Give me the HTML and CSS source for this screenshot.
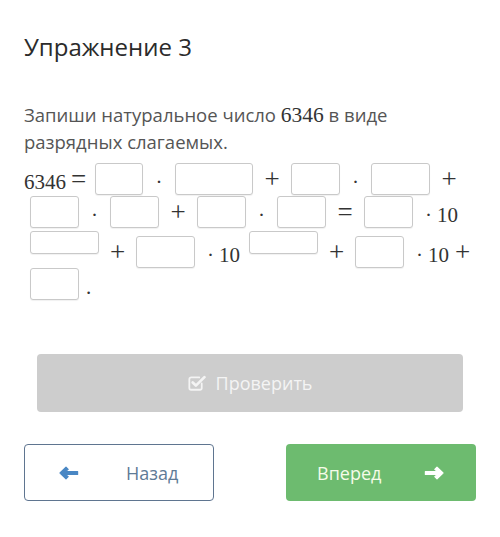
FILE: index.html
```html
<!DOCTYPE html>
<html lang="ru">
<head>
<meta charset="utf-8">
<title>Упражнение 3</title>
<link rel="stylesheet" href="styles.css">
</head>
<body>
<main class="page">
  <h1 class="title">Упражнение 3</h1>
  <p class="task">Запиши натуральное число <span class="m">6346</span> в виде разрядных слагаемых.</p>

  <div class="math">
    <div class="row r1">
      <span class="t num">6346</span><span class="t rel eq1">=</span>
      <span class="box w48"></span>
      <span class="t dot" style="width:32px">·</span>
      <span class="box w78"></span>
      <span class="t op" style="width:38px">+</span>
      <span class="box w49"></span>
      <span class="t dot" style="width:31px">·</span>
      <span class="box w59"></span>
      <span class="t op" style="width:38px">+</span>
    </div>
    <div class="row r2">
      <span class="box w49"></span>
      <span class="t dot" style="width:31px">·</span>
      <span class="box w49"></span>
      <span class="t op" style="width:38px">+</span>
      <span class="box w49"></span>
      <span class="t dot" style="width:31px">·</span>
      <span class="box w49"></span>
      <span class="t op" style="width:38px">=</span>
      <span class="box w49"></span>
      <span class="t cdot">·</span><span class="t num ten">10</span>
    </div>
    <div class="row r3">
      <span class="box w69 short"></span>
      <span class="t op" style="width:37px">+</span>
      <span class="box w59"></span>
      <span class="t cdot">·</span><span class="t num ten">10</span>
      <span class="box w69 short after10"></span>
      <span class="t op" style="width:37px">+</span>
      <span class="box w49"></span>
      <span class="t cdot">·</span><span class="t num ten">10</span><span class="t op plus-end">+</span>
    </div>
    <div class="row r4">
      <span class="box w49"></span>
      <span class="t period">.</span>
    </div>
  </div>

  <button class="check-btn" type="button">
    <svg class="check-ico" viewBox="0 0 16 16" width="18" height="18" aria-hidden="true">
      <path d="M12.2 8.4 V12.4 A1.6 1.6 0 0 1 10.6 14 H2.8 A1.6 1.6 0 0 1 1.2 12.4 V4.6 A1.6 1.6 0 0 1 2.8 3 H10" fill="none" stroke="currentColor" stroke-width="1.6" stroke-linecap="round"/>
      <path d="M4.2 7.6 L7 10.3 L14.6 2.8" fill="none" stroke="currentColor" stroke-width="2.4" stroke-linecap="round" stroke-linejoin="round"/>
    </svg>
    <span>Проверить</span>
  </button>

  <nav class="nav">
    <button class="nav-btn back" type="button">
      <svg class="arrow" viewBox="0 0 20 14" width="20" height="14" aria-hidden="true">
        <path d="M1 7 L7 1.2 L9.2 3.4 L6.4 5.6 H18.6 V8.4 H6.4 L9.2 10.6 L7 12.8 Z" fill="currentColor" stroke="currentColor" stroke-width="1.2" stroke-linejoin="round"/>
      </svg>
      <span>Назад</span>
    </button>
    <button class="nav-btn next" type="button">
      <span>Вперед</span>
      <svg class="arrow" viewBox="0 0 20 14" width="20" height="14" aria-hidden="true">
        <path d="M19 7 L13 1.2 L10.8 3.4 L13.6 5.6 H1.4 V8.4 H13.6 L10.8 10.6 L13 12.8 Z" fill="currentColor" stroke="currentColor" stroke-width="1.2" stroke-linejoin="round"/>
      </svg>
    </button>
  </nav>
</main>
</body>
</html>
```

FILE: styles.css
```css
html, body {
  margin: 0;
  padding: 0;
  background: #ffffff;
}

body {
  font-family: "Open Sans", "Noto Sans", sans-serif;
}

.page {
  padding: 31px 24px 0 24px;
}

.title {
  margin: 0;
  font-size: 24px;
  line-height: 32px;
  font-weight: 400;
  color: #2b2b2b;
}

.task {
  max-width: 400px;
  margin: 37.6px 0 0 0;
  font-size: 18.5px;
  line-height: 27px;
  color: #555555;
}

.m {
  font-family: "Liberation Serif", "Times New Roman", serif;
  font-size: 21.5px;
  line-height: 1;
  color: #333333;
}

.math {
  margin-top: 8.7px;
  font-family: "Liberation Serif", "Times New Roman", serif;
  font-size: 21px;
  color: #333333;
}

.row {
  display: flex;
  align-items: flex-end;
}

.r1 { height: 32px; }
.r2 { height: 32px; margin-top: 1px; padding-left: 6px; }
.r3 { height: 37px; margin-top: 3px; padding-left: 6px; }
.r4 { height: 32px; margin-top: 0; padding-left: 6px; }

.t {
  display: block;
  height: 32px;
  box-sizing: border-box;
  padding-top: 6px;
  line-height: 26px;
  white-space: nowrap;
}

.num { font-size: 21px; }

.eq1 {
  width: 29px;
  text-align: left;
  padding-left: 5px;
  font-size: 27px;
  padding-top: 3px;
}

.op {
  text-align: center;
  font-size: 27px;
  padding-top: 3px;
}

.dot {
  text-align: center;
}

.cdot {
  margin-left: 12px;
}

.ten {
  margin-left: 5px;
}

.after10 {
  margin-left: 9px;
}

.plus-end {
  margin-left: 6px;
}

.period {
  margin-left: 7px;
}

.box {
  display: block;
  height: 32px;
  box-sizing: border-box;
  border: 1px solid #c9c9c9;
  border-radius: 3px;
  background: #ffffff;
  box-shadow: 0 1px 1px rgba(0, 0, 0, 0.06);
}

.box.short {
  height: 23px;
  align-self: flex-start;
}

.w48 { width: 48px; }
.w49 { width: 49px; }
.w59 { width: 59px; }
.w69 { width: 69px; }
.w78 { width: 78px; }

.check-btn {
  display: flex;
  align-items: center;
  justify-content: center;
  gap: 10px;
  width: 426px;
  height: 58px;
  margin: 54px 0 0 13px;
  padding: 0;
  border: none;
  border-radius: 4px;
  background: #cdcdcd;
  color: #f4f4f4;
  font-family: "Open Sans", "Noto Sans", sans-serif;
  font-size: 18px;
}

.check-ico {
  display: block;
  margin-top: -1px;
}

.nav {
  display: flex;
  justify-content: space-between;
  margin-top: 32px;
}

.nav-btn {
  display: flex;
  align-items: center;
  width: 190px;
  height: 57px;
  box-sizing: border-box;
  border-radius: 4px;
  font-family: "Open Sans", "Noto Sans", sans-serif;
  font-size: 18px;
  padding: 0;
}

.nav-btn .arrow {
  display: block;
}

.back {
  background: #ffffff;
  border: 1.5px solid #5f7590;
  color: #5f7b97;
  padding-left: 34px;
  gap: 47px;
}

.back .arrow {
  color: #4a87c4;
}

.next {
  background: #6dbb6f;
  border: none;
  color: #f5fbe9;
  justify-content: space-between;
  padding: 0 32px 0 31px;
}

.next .arrow {
  color: #ffffff;
}
```
